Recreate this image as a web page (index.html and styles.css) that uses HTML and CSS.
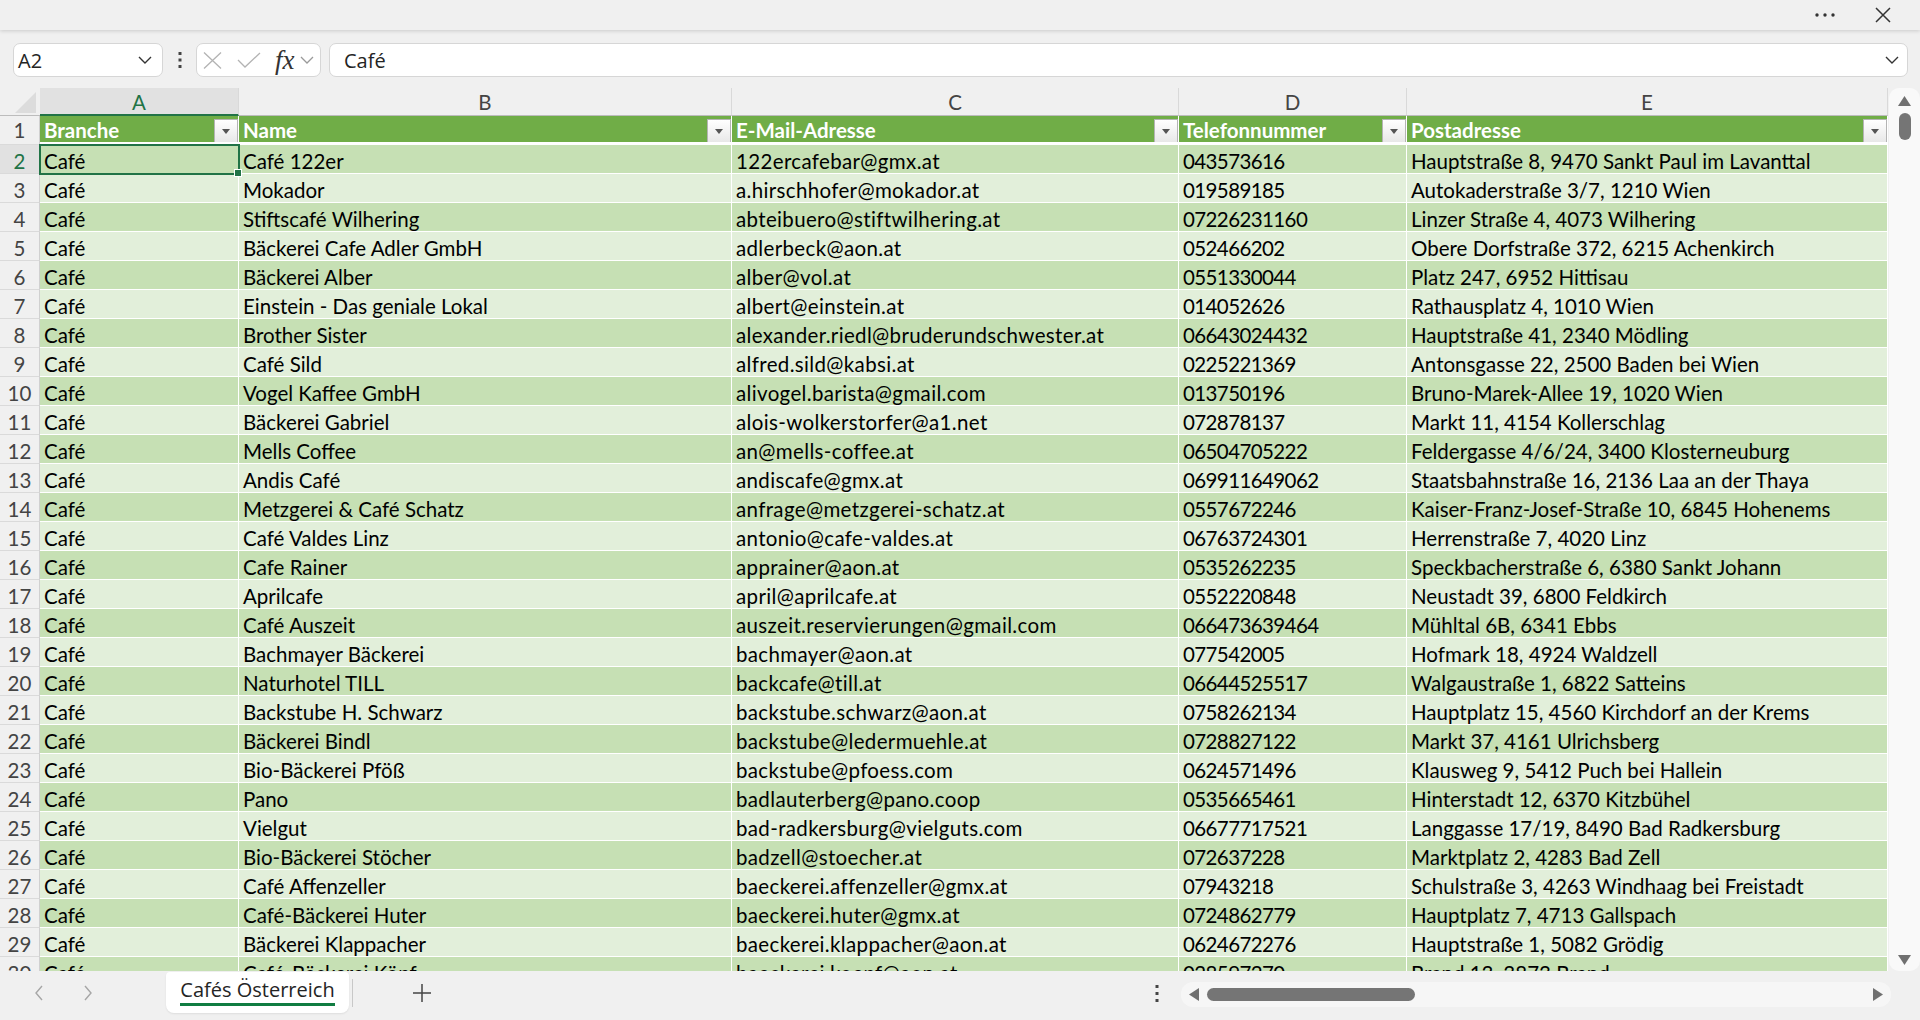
FILE: index.html
```html
<!DOCTYPE html>
<html lang="de">
<head>
    <meta charset="UTF-8">
    <title>Cafés Österreich</title>
    <link rel="stylesheet" href="styles.css">
</head>
<body>
    <div class="titlebar">
        <svg width="22" height="6" viewBox="0 0 22 6"><circle cx="3" cy="3" r="1.7" fill="#333"/><circle cx="11" cy="3" r="1.7" fill="#333"/><circle cx="19" cy="3" r="1.7" fill="#333"/></svg>
        <svg width="16" height="16" viewBox="0 0 16 16"><path d="M1 1 L15 15 M15 1 L1 15" stroke="#333" stroke-width="1.5" fill="none"/></svg>
    </div>

    <div class="formula-bar">
        <div class="box namebox">
            <span>A2</span>
            <svg width="14" height="8" viewBox="0 0 14 8"><polyline points="1,1 7,7 13,1" stroke="#333" stroke-width="1.4" fill="none"/></svg>
        </div>
        <div class="more">
            <svg width="4" height="18" viewBox="0 0 4 18"><rect x="0.5" y="1" width="3" height="3" fill="#444"/><rect x="0.5" y="7.5" width="3" height="3" fill="#444"/><rect x="0.5" y="14" width="3" height="3" fill="#444"/></svg>
        </div>
        <div class="box fx-group">
            <svg class="fx-cancel" width="19" height="17" viewBox="0 0 19 17"><path d="M1 0.5 L18 16.5 M18 0.5 L1 16.5" stroke="#b3b3b3" stroke-width="1.3" fill="none"/></svg>
            <svg class="fx-ok" width="24" height="16" viewBox="0 0 24 16"><polyline points="1,8 8,15 23,1" stroke="#b3b3b3" stroke-width="1.3" fill="none"/></svg>
            <span class="fx">fx</span>
            <svg class="fx-drop" width="14" height="8" viewBox="0 0 14 8"><polyline points="1,1 7,7 13,1" stroke="#9a9a9a" stroke-width="1.3" fill="none"/></svg>
        </div>
        <div class="box formula-input">
            <span>Café</span>
            <svg width="14" height="8" viewBox="0 0 14 8"><polyline points="1,1 7,7 13,1" stroke="#333" stroke-width="1.4" fill="none"/></svg>
        </div>
    </div>

    <div class="sheet">
        <div class="grid">
            <div class="row colhead">
                <div class="corner"><svg width="21" height="21" viewBox="0 0 21 21"><polygon points="21,0 21,21 0,21" fill="#dcdcdc"/></svg></div>
                <div class="selected">A</div><div>B</div><div>C</div><div>D</div><div>E</div>
            </div>
            <div class="row head">
                <div class="rh">1</div>
                <div class="c">Branche<span class="filter"></span></div>
                <div class="c">Name<span class="filter"></span></div>
                <div class="c">E-Mail-Adresse<span class="filter"></span></div>
                <div class="c">Telefonnummer<span class="filter"></span></div>
                <div class="c">Postadresse<span class="filter"></span></div>
            </div>
            <div class="row dark"><div class="rh active">2</div><div class="c sel">Café<span class="handle"></span></div><div class="c">Café 122er</div><div class="c mail">122ercafebar@gmx.at</div><div class="c tel">043573616</div><div class="c">Hauptstraße 8, 9470 Sankt Paul im Lavanttal</div></div>
            <div class="row light"><div class="rh">3</div><div class="c">Café</div><div class="c">Mokador</div><div class="c mail">a.hirschhofer@mokador.at</div><div class="c tel">019589185</div><div class="c">Autokaderstraße 3/7, 1210 Wien</div></div>
            <div class="row dark"><div class="rh">4</div><div class="c">Café</div><div class="c">Stiftscafé Wilhering</div><div class="c mail">abteibuero@stiftwilhering.at</div><div class="c tel">07226231160</div><div class="c">Linzer Straße 4, 4073 Wilhering</div></div>
            <div class="row light"><div class="rh">5</div><div class="c">Café</div><div class="c">Bäckerei Cafe Adler GmbH</div><div class="c mail">adlerbeck@aon.at</div><div class="c tel">052466202</div><div class="c">Obere Dorfstraße 372, 6215 Achenkirch</div></div>
            <div class="row dark"><div class="rh">6</div><div class="c">Café</div><div class="c">Bäckerei Alber</div><div class="c mail">alber@vol.at</div><div class="c tel">0551330044</div><div class="c">Platz 247, 6952 Hittisau</div></div>
            <div class="row light"><div class="rh">7</div><div class="c">Café</div><div class="c">Einstein - Das geniale Lokal</div><div class="c mail">albert@einstein.at</div><div class="c tel">014052626</div><div class="c">Rathausplatz 4, 1010 Wien</div></div>
            <div class="row dark"><div class="rh">8</div><div class="c">Café</div><div class="c">Brother Sister</div><div class="c mail">alexander.riedl@bruderundschwester.at</div><div class="c tel">06643024432</div><div class="c">Hauptstraße 41, 2340 Mödling</div></div>
            <div class="row light"><div class="rh">9</div><div class="c">Café</div><div class="c">Café Sild</div><div class="c mail">alfred.sild@kabsi.at</div><div class="c tel">0225221369</div><div class="c">Antonsgasse 22, 2500 Baden bei Wien</div></div>
            <div class="row dark"><div class="rh">10</div><div class="c">Café</div><div class="c">Vogel Kaffee GmbH</div><div class="c mail">alivogel.barista@gmail.com</div><div class="c tel">013750196</div><div class="c">Bruno-Marek-Allee 19, 1020 Wien</div></div>
            <div class="row light"><div class="rh">11</div><div class="c">Café</div><div class="c">Bäckerei Gabriel</div><div class="c mail">alois-wolkerstorfer@a1.net</div><div class="c tel">072878137</div><div class="c">Markt 11, 4154 Kollerschlag</div></div>
            <div class="row dark"><div class="rh">12</div><div class="c">Café</div><div class="c">Mells Coffee</div><div class="c mail">an@mells-coffee.at</div><div class="c tel">06504705222</div><div class="c">Feldergasse 4/6/24, 3400 Klosterneuburg</div></div>
            <div class="row light"><div class="rh">13</div><div class="c">Café</div><div class="c">Andis Café</div><div class="c mail">andiscafe@gmx.at</div><div class="c tel">069911649062</div><div class="c">Staatsbahnstraße 16, 2136 Laa an der Thaya</div></div>
            <div class="row dark"><div class="rh">14</div><div class="c">Café</div><div class="c">Metzgerei &amp; Café Schatz</div><div class="c mail">anfrage@metzgerei-schatz.at</div><div class="c tel">0557672246</div><div class="c">Kaiser-Franz-Josef-Straße 10, 6845 Hohenems</div></div>
            <div class="row light"><div class="rh">15</div><div class="c">Café</div><div class="c">Café Valdes Linz</div><div class="c mail">antonio@cafe-valdes.at</div><div class="c tel">06763724301</div><div class="c">Herrenstraße 7, 4020 Linz</div></div>
            <div class="row dark"><div class="rh">16</div><div class="c">Café</div><div class="c">Cafe Rainer</div><div class="c mail">apprainer@aon.at</div><div class="c tel">0535262235</div><div class="c">Speckbacherstraße 6, 6380 Sankt Johann</div></div>
            <div class="row light"><div class="rh">17</div><div class="c">Café</div><div class="c">Aprilcafe</div><div class="c mail">april@aprilcafe.at</div><div class="c tel">0552220848</div><div class="c">Neustadt 39, 6800 Feldkirch</div></div>
            <div class="row dark"><div class="rh">18</div><div class="c">Café</div><div class="c">Café Auszeit</div><div class="c mail">auszeit.reservierungen@gmail.com</div><div class="c tel">066473639464</div><div class="c">Mühltal 6B, 6341 Ebbs</div></div>
            <div class="row light"><div class="rh">19</div><div class="c">Café</div><div class="c">Bachmayer Bäckerei</div><div class="c mail">bachmayer@aon.at</div><div class="c tel">077542005</div><div class="c">Hofmark 18, 4924 Waldzell</div></div>
            <div class="row dark"><div class="rh">20</div><div class="c">Café</div><div class="c">Naturhotel TILL</div><div class="c mail">backcafe@till.at</div><div class="c tel">06644525517</div><div class="c">Walgaustraße 1, 6822 Satteins</div></div>
            <div class="row light"><div class="rh">21</div><div class="c">Café</div><div class="c">Backstube H. Schwarz</div><div class="c mail">backstube.schwarz@aon.at</div><div class="c tel">0758262134</div><div class="c">Hauptplatz 15, 4560 Kirchdorf an der Krems</div></div>
            <div class="row dark"><div class="rh">22</div><div class="c">Café</div><div class="c">Bäckerei Bindl</div><div class="c mail">backstube@ledermuehle.at</div><div class="c tel">0728827122</div><div class="c">Markt 37, 4161 Ulrichsberg</div></div>
            <div class="row light"><div class="rh">23</div><div class="c">Café</div><div class="c">Bio-Bäckerei Pföß</div><div class="c mail">backstube@pfoess.com</div><div class="c tel">0624571496</div><div class="c">Klausweg 9, 5412 Puch bei Hallein</div></div>
            <div class="row dark"><div class="rh">24</div><div class="c">Café</div><div class="c">Pano</div><div class="c mail">badlauterberg@pano.coop</div><div class="c tel">0535665461</div><div class="c">Hinterstadt 12, 6370 Kitzbühel</div></div>
            <div class="row light"><div class="rh">25</div><div class="c">Café</div><div class="c">Vielgut</div><div class="c mail">bad-radkersburg@vielguts.com</div><div class="c tel">06677717521</div><div class="c">Langgasse 17/19, 8490 Bad Radkersburg</div></div>
            <div class="row dark"><div class="rh">26</div><div class="c">Café</div><div class="c">Bio-Bäckerei Stöcher</div><div class="c mail">badzell@stoecher.at</div><div class="c tel">072637228</div><div class="c">Marktplatz 2, 4283 Bad Zell</div></div>
            <div class="row light"><div class="rh">27</div><div class="c">Café</div><div class="c">Café Affenzeller</div><div class="c mail">baeckerei.affenzeller@gmx.at</div><div class="c tel">07943218</div><div class="c">Schulstraße 3, 4263 Windhaag bei Freistadt</div></div>
            <div class="row dark"><div class="rh">28</div><div class="c">Café</div><div class="c">Café-Bäckerei Huter</div><div class="c mail">baeckerei.huter@gmx.at</div><div class="c tel">0724862779</div><div class="c">Hauptplatz 7, 4713 Gallspach</div></div>
            <div class="row light"><div class="rh">29</div><div class="c">Café</div><div class="c">Bäckerei Klappacher</div><div class="c mail">baeckerei.klappacher@aon.at</div><div class="c tel">0624672276</div><div class="c">Hauptstraße 1, 5082 Grödig</div></div>
            <div class="row dark"><div class="rh">30</div><div class="c">Café</div><div class="c">Café-Bäckerei Köpf</div><div class="c mail">baeckerei.koepf@aon.at</div><div class="c tel">028597270</div><div class="c">Brand 13, 3873 Brand</div></div>
        </div>
        <div class="vscroll">
            <svg width="13" height="10" viewBox="0 0 13 10"><polygon points="6.5,0 13,10 0,10" fill="#707070"/></svg>
            <div class="vthumb"></div>
            <svg class="vdown" width="13" height="10" viewBox="0 0 13 10"><polygon points="0,0 13,0 6.5,10" fill="#707070"/></svg>
        </div>
    </div>

    <div class="tabbar">
        <div class="nav">
            <svg width="8" height="16" viewBox="0 0 8 16"><polyline points="7,1 1,8 7,15" stroke="#a6a6a6" stroke-width="1.4" fill="none"/></svg>
            <svg width="8" height="16" viewBox="0 0 8 16"><polyline points="1,1 7,8 1,15" stroke="#a6a6a6" stroke-width="1.4" fill="none"/></svg>
        </div>
        <div class="tab"><span>Cafés Österreich</span></div>
        <div class="sep"></div>
        <div class="add">
            <svg width="18" height="18" viewBox="0 0 18 18"><path d="M9 0 V18 M0 9 H18" stroke="#444" stroke-width="1.5" fill="none"/></svg>
        </div>
        <div class="spacer"></div>
        <div class="tab-more">
            <svg width="4" height="17" viewBox="0 0 4 17"><rect x="0.5" y="0" width="3" height="3" fill="#444"/><rect x="0.5" y="7" width="3" height="3" fill="#444"/><rect x="0.5" y="14" width="3" height="3" fill="#444"/></svg>
        </div>
        <div class="htrack">
            <svg width="10" height="13" viewBox="0 0 10 13"><polygon points="0,6.5 10,0 10,13" fill="#707070"/></svg>
            <div class="hthumb"></div>
            <div class="spacer"></div>
            <svg width="10" height="13" viewBox="0 0 10 13"><polygon points="0,0 10,6.5 0,13" fill="#707070"/></svg>
        </div>
    </div>
</body>
</html>
```

FILE: styles.css
```css
body {
    margin: 0;
    background-color: #f0f0f0;
    font-family: "Open Sans", "Noto Sans", sans-serif;
    color: #242424;
    overflow: hidden;
}

/* top strip */
.titlebar {
    position: relative;
    height: 30px;
    display: flex;
    justify-content: flex-end;
    align-items: center;
    gap: 39px;
    padding-right: 29px;
    background-color: #f0f0f0;
    box-shadow: 0 1px 4px rgba(0,0,0,0.16);
}

/* formula bar */
.formula-bar {
    display: flex;
    align-items: center;
    height: 34px;
    margin: 13px 12px 11px 13px;
}
.box {
    height: 34px;
    box-sizing: border-box;
    background-color: #fff;
    border: 1px solid #d6d6d6;
    border-radius: 7px;
    display: flex;
    align-items: center;
}
.namebox {
    width: 150px;
    padding: 0 10px 0 4px;
    justify-content: space-between;
    font-size: 20px;
}
.more {
    width: 33px;
    display: flex;
    justify-content: center;
}
.fx-group {
    width: 125px;
    padding-left: 6px;
}
.fx-ok {
    margin-left: 15px;
}
.fx {
    margin-left: 14px;
    font-family: "Liberation Serif", "DejaVu Serif", serif;
    font-style: italic;
    font-size: 27px;
    line-height: 30px;
    color: #333;
}
.fx-drop {
    margin-left: 5px;
}
.formula-input {
    flex: 1;
    margin-left: 8px;
    padding: 0 8px 0 14px;
    justify-content: space-between;
    font-size: 20px;
}

/* grid */
.sheet {
    display: flex;
    height: 883px;
}
.grid {
    width: 1888px;
    overflow: hidden;
    font-family: Lato, "Open Sans", sans-serif;
    font-size: 20.5px;
    color: #000;
}
.row {
    display: grid;
    grid-template-columns: 40px 199px 493px 447px 228px 481px;
    height: 29px;
}
.row > div {
    box-sizing: border-box;
    white-space: nowrap;
    overflow: hidden;
}
.colhead {
    height: 28px;
}
.colhead > div {
    text-align: center;
    color: #444;
    padding-top: 2px;
    line-height: 24px;
    border-right: 1px solid #d9d9d9;
    border-bottom: 1px solid #bcbcbc;
}
.colhead > .selected {
    background-color: #e1e1e1;
    color: #217346;
    border-bottom: 2px solid #217346;
}
.colhead > .corner {
    display: flex;
    justify-content: flex-end;
    align-items: flex-end;
    padding: 0 4px 2px 0;
    border-right: none;
}
.rh {
    text-align: center;
    color: #444;
    padding-top: 4px;
    line-height: 24px;
    border-bottom: 1px solid #dadada;
    border-right: 1px solid #d0d0d0;
}
.rh.active {
    background-color: #e1e1e1;
    color: #217346;
}
.c {
    padding: 4px 4px 0;
    line-height: 24px;
    border-right: 1px solid #fff;
    border-bottom: 1px solid #fff;
}
.c.mail {
    letter-spacing: 0.35px;
}
.c.tel {
    letter-spacing: -0.6px;
}
.head .c {
    position: relative;
    background-color: #70ad47;
    color: #fff;
    font-weight: 700;
    padding-top: 2px;
    border-bottom: 3px solid #fff;
}
.head .rh {
    padding-top: 2px;
}
.dark .c {
    background-color: #c6e0b4;
}
.light .c {
    background-color: #e2efda;
}
.filter {
    position: absolute;
    right: 0;
    top: 3px;
    width: 24px;
    height: 24px;
    box-sizing: border-box;
    border: 1px solid #b4b4b4;
    background: linear-gradient(#ffffff, #e8e8e8);
}
.filter::after {
    content: "";
    position: absolute;
    left: 7px;
    top: 9px;
    border-left: 4.5px solid transparent;
    border-right: 4.5px solid transparent;
    border-top: 5px solid #555;
}
.row > .sel {
    position: relative;
    overflow: visible;
}
.sel::after {
    content: "";
    position: absolute;
    top: -1px;
    left: -1px;
    right: -2px;
    bottom: -2px;
    border: 2px solid #217346;
}
.handle {
    position: absolute;
    right: -3px;
    bottom: -3px;
    width: 6px;
    height: 6px;
    background-color: #217346;
    box-shadow: 0 0 0 1px #fff;
    z-index: 1;
}

/* vertical scrollbar */
.vscroll {
    width: 31px;
    margin-left: 1px;
    box-sizing: border-box;
    padding: 8px 0 6px;
    background-color: #f9f9f9;
    border-radius: 10px;
    display: flex;
    flex-direction: column;
    align-items: center;
}
.vthumb {
    width: 12px;
    height: 27px;
    margin-top: 7px;
    border-radius: 6px;
    background-color: #757575;
}
.vdown {
    margin-top: auto;
}

/* sheet tabs */
.tabbar {
    display: flex;
    align-items: flex-start;
    height: 49px;
}
.nav {
    width: 166px;
    height: 44px;
    box-sizing: border-box;
    padding-left: 35px;
    display: flex;
    align-items: center;
    gap: 41px;
}
.tab {
    margin-top: 1px;
    width: 183px;
    height: 41px;
    box-sizing: border-box;
    padding-top: 4px;
    background-color: #fff;
    border-radius: 4px 4px 8px 8px;
    box-shadow: 0 1px 2px rgba(0,0,0,0.08);
    display: flex;
    justify-content: center;
    align-items: flex-start;
}
.tab span {
    font-size: 20px;
    line-height: 27px;
    font-weight: 500;
    color: #242424;
    border-bottom: 3px solid #107c41;
}
.sep {
    width: 1px;
    height: 28px;
    margin: 8px 0 0 3px;
    background-color: #c8c8c8;
}
.add {
    width: 40px;
    height: 44px;
    margin-left: 49px;
    display: flex;
    justify-content: center;
    align-items: center;
}
.spacer {
    flex: 1;
}
.tab-more {
    width: 24px;
    height: 44px;
    margin-right: 12px;
    display: flex;
    justify-content: center;
    align-items: center;
}
.htrack {
    width: 710px;
    height: 25px;
    margin: 11px 29px 0 0;
    box-sizing: border-box;
    padding: 0 8px;
    background-color: #f6f6f6;
    border-radius: 12px;
    display: flex;
    align-items: center;
}
.hthumb {
    width: 208px;
    height: 13px;
    margin-left: 8px;
    border-radius: 7px;
    background-color: #757575;
}
```
